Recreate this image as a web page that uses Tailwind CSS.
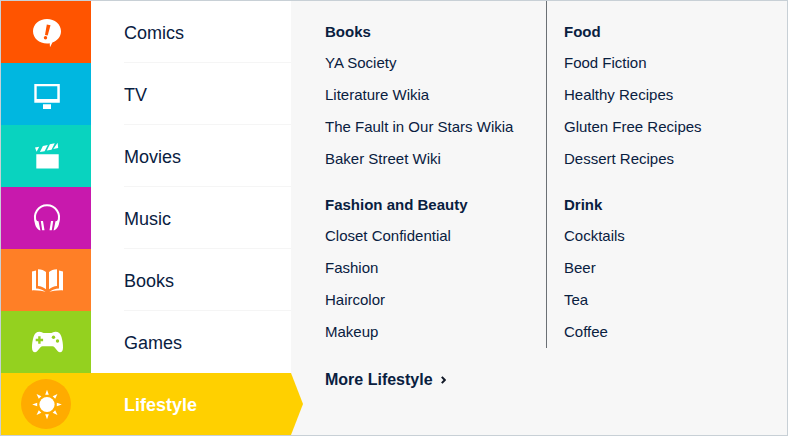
<!DOCTYPE html>
<html lang="en">
<head>
<meta charset="utf-8">
<meta name="viewport" content="width=device-width, initial-scale=1">
<title>Wiki navigation</title>
<script src="https://cdn.jsdelivr.net/npm/@tailwindcss/browser@4"></script>
</head>
<body class="bg-white font-['Liberation_Sans',Arial,sans-serif] text-[#09203f]">
<div class="flex min-h-screen border border-[#c8d0d6] bg-[#f7f7f7]">
  <nav aria-label="Categories" class="w-[290px] shrink-0 bg-white text-lg">
    <a href="#comics" class="flex h-[62px]">
      <span class="flex w-[90px] items-center justify-center bg-[#ff5400]">
        <svg class="size-12" viewBox="0 0 48 48" aria-hidden="true"><path fill="#fff" d="M25 11c7.800 0 14 5.300 14 12.200 0 5.200-3.600 9.500-8.600 11.300L28 39.300l-.3-4c-1 .2-1.800.2-2.700.2-7.800 0-14-5.400-14-12.300S17.200 11 25 11z"/><path fill="#ff5400" d="M24.800 16.500l3.700.7-2.800 10.300-2.700-.5z"/><circle cx="23.500" cy="29.800" r="1.700" fill="#ff5400"/></svg>
      </span>
      <span class="ml-[33px] flex flex-1 items-center border-b border-[#f5f5f5] pt-0.5">Comics</span>
    </a>
    <a href="#tv" class="flex h-[62px]">
      <span class="flex w-[90px] items-center justify-center bg-[#00b7e0]">
        <svg class="size-12" viewBox="0 0 48 48" aria-hidden="true"><path fill="#fff" fill-rule="evenodd" d="M12.300 14h25.500v18.700H12.300zM14.700 16.300V29h20.600V16.300zM21 34.300h8V39h-8z"/></svg>
      </span>
      <span class="ml-[33px] flex flex-1 items-center border-b border-[#f5f5f5] pt-0.5">TV</span>
    </a>
    <a href="#movies" class="flex h-[62px]">
      <span class="flex w-[90px] items-center justify-center bg-[#09d3bf]">
        <svg class="size-12" viewBox="0 0 48 48" aria-hidden="true"><path fill="#fff" d="M14.300 22.200h22.400v14.400H14.300zM13 15.600l4.200-.9-2.600 5zM20.900 13.900l4.900-1-3.200 6.400-4.700.7zM27.900 12.300l4.900-1-3.300 6.400-4.700.8zM35.600 10.700l.6 5.300-4.900.9z"/></svg>
      </span>
      <span class="ml-[33px] flex flex-1 items-center border-b border-[#f5f5f5] pt-0.5">Movies</span>
    </a>
    <a href="#music" class="flex h-[62px]">
      <span class="flex w-[90px] items-center justify-center bg-[#c819ad]">
        <svg class="size-12" viewBox="0 0 48 48" aria-hidden="true"><path fill="none" stroke="#fff" stroke-width="2" d="M14 28a12 12 0 1 1 22 0"/><path fill="#fff" d="M12.300 24c.6 2 2.400 3 4.200 3.200l1.900 9.400c-4-1.400-6-5.600-6.100-12.600zM37.700 24c-.6 2-2.400 3-4.200 3.200l-1.900 9.400c4-1.400 6-5.600 6.100-12.600zM18.800 27h2.200l1.500 9.200h-2.300zM31.200 27H29l-1.500 9.200h2.300z"/></svg>
      </span>
      <span class="ml-[33px] flex flex-1 items-center border-b border-[#f5f5f5] pt-0.5">Music</span>
    </a>
    <a href="#books" class="flex h-[62px]">
      <span class="flex w-[90px] items-center justify-center bg-[#ff7f26]">
        <svg class="size-12" viewBox="0 0 48 48" aria-hidden="true"><path fill="#fff" d="M10 15.400l4-.9v17.900c3.500.2 7 1.300 9.500 3.600-3-1-7-1.800-13.500-1.600zM16 13.200c3.400 0 6.200 1 8 2.900v17.200c-2.400-2-5-2.900-8-3.200zM41 15.400l-4-.9v17.900c-3.500.2-7 1.300-9.500 3.600 3-1 7-1.800 13.500-1.600zM35 13.200c-3.400 0-6.200 1-8 2.900v17.200c2.400-2 5-2.900 8-3.200z"/></svg>
      </span>
      <span class="ml-[33px] flex flex-1 items-center border-b border-[#f5f5f5] pt-0.5">Books</span>
    </a>
    <a href="#games" class="flex h-[62px]">
      <span class="flex w-[90px] items-center justify-center bg-[#94d11f]">
        <svg class="size-12" viewBox="0 0 48 48" aria-hidden="true"><path fill="#fff" d="M17.500 13.800c2 0 3 1.200 4.200 1.200h7.600c1.200 0 2.200-1.200 4.200-1.200 3 0 5 1.700 6 5.200 1 3.700 1.600 7 1.500 10.500 0 3-1 4.700-3 4.700-3.300 0-4.500-6-7.500-6h-10c-3 0-4.200 6-7.500 6-2 0-3-1.700-3-4.700-.1-3.500.5-6.800 1.500-10.500 1-3.500 3-5.200 6-5.200z"/><path fill="#94d11f" d="M16.200 18.300h2.400v2.500h2.500v2.400h-2.500v2.500h-2.400v-2.500h-2.500v-2.400h2.500z"/><circle cx="31.500" cy="19.300" r="1.700" fill="#94d11f"/><circle cx="35.500" cy="23" r="1.700" fill="#94d11f"/></svg>
      </span>
      <span class="ml-[33px] flex flex-1 items-center pt-px">Games</span>
    </a>
    <a href="#lifestyle" aria-current="page" class="relative flex h-[62px] bg-[#ffd000] font-bold text-white">
      <span class="flex w-[90px] items-center justify-center">
        <span class="flex size-[50px] items-center justify-center rounded-full bg-[#ffab00]">
          <svg class="size-12" viewBox="0 0 48 48" aria-hidden="true"><g fill="#fff"><circle cx="25" cy="24.500" r="7.600"/><g id="rays"><path d="M25 9.700l1.800 5h-3.600zM25 39.300l1.800-5h-3.600zM10.200 24.500l5-1.800v3.600zM39.800 24.500l-5-1.800v3.600z"/></g><use href="#rays" transform="rotate(45 25 24.500)"/></g></svg>
        </span>
      </span>
      <span class="ml-[33px] flex flex-1 items-center pt-px">Lifestyle</span>
      <svg class="absolute left-full top-0 h-full w-3" viewBox="0 0 12 62" preserveAspectRatio="none" aria-hidden="true"><path fill="#ffd000" d="M0 0l12 31L0 62z"/></svg>
    </a>
  </nav>

  <main class="min-w-0 flex-1 text-[15px]">
    <div class="grid grid-cols-[256px_1fr] leading-8">
      <div class="flex flex-col gap-[15px] border-r border-[#6b7075] pl-[34px] pt-4">
        <section>
          <h2 class="font-bold leading-[30px]">Books</h2>
          <ul>
            <li><a href="#ya-society">YA Society</a></li>
            <li><a href="#literature">Literature Wikia</a></li>
            <li><a href="#fault">The Fault in Our Stars Wikia</a></li>
            <li><a href="#baker-street">Baker Street Wiki</a></li>
          </ul>
        </section>
        <section>
          <h2 class="font-bold leading-[30px]">Fashion and Beauty</h2>
          <ul>
            <li><a href="#closet">Closet Confidential</a></li>
            <li><a href="#fashion">Fashion</a></li>
            <li><a href="#haircolor">Haircolor</a></li>
            <li><a href="#makeup">Makeup</a></li>
          </ul>
        </section>
      </div>
      <div class="flex flex-col gap-[15px] pl-[17px] pt-4">
        <section>
          <h2 class="font-bold leading-[30px]">Food</h2>
          <ul>
            <li><a href="#food-fiction">Food Fiction</a></li>
            <li><a href="#healthy">Healthy Recipes</a></li>
            <li><a href="#gluten-free">Gluten Free Recipes</a></li>
            <li><a href="#dessert">Dessert Recipes</a></li>
          </ul>
        </section>
        <section>
          <h2 class="font-bold leading-[30px]">Drink</h2>
          <ul>
            <li><a href="#cocktails">Cocktails</a></li>
            <li><a href="#beer">Beer</a></li>
            <li><a href="#tea">Tea</a></li>
            <li><a href="#coffee">Coffee</a></li>
          </ul>
        </section>
      </div>
    </div>
    <a href="#more-lifestyle" class="mt-5 ml-[34px] inline-flex items-center gap-2 text-base font-bold">More Lifestyle
      <svg class="h-2 w-[5px]" viewBox="0 0 5 8" aria-hidden="true"><path fill="none" stroke="#111827" stroke-width="2" d="M.8.900L3.800 4 .8 7.100"/></svg>
    </a>
  </main>
</div>
</body>
</html>
